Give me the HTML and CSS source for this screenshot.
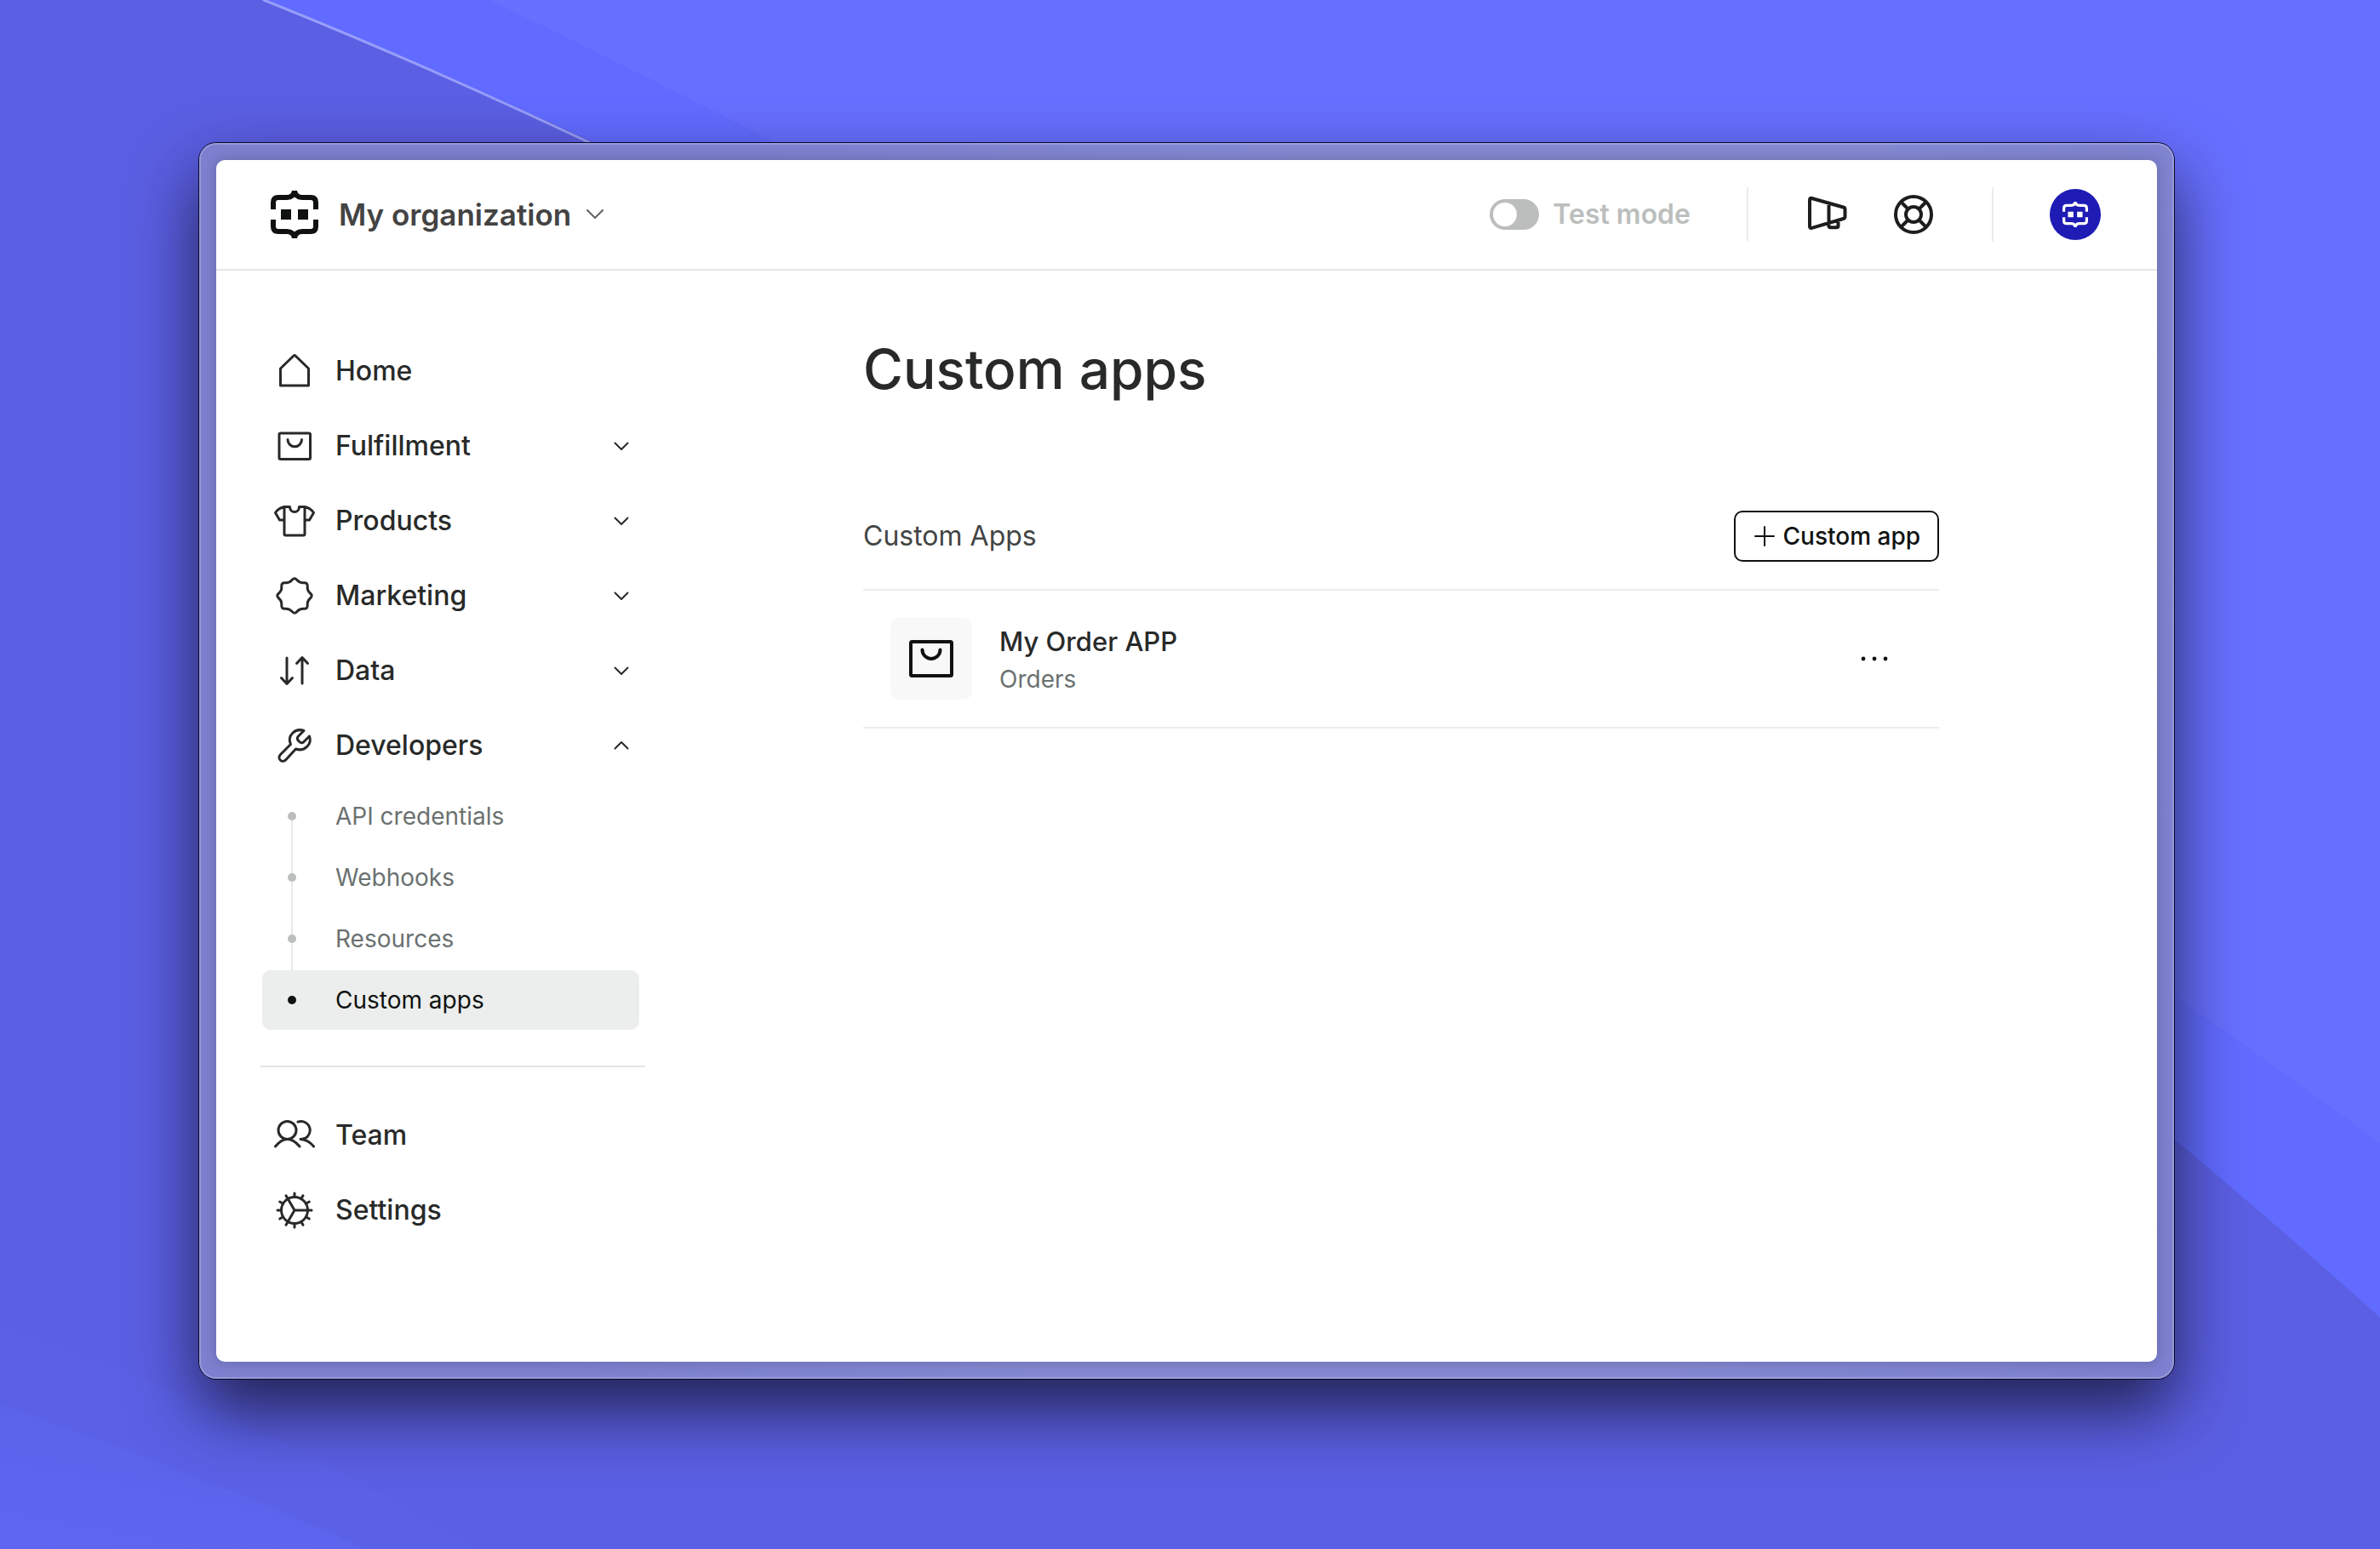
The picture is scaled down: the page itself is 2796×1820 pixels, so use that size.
FILE: index.html
```html
<!DOCTYPE html>
<html lang="en">
<head>
<meta charset="utf-8">
<title>Custom apps</title>
<link rel="stylesheet" href="styles.css">
</head>
<body>
<svg class="backdrop" viewBox="0 0 2796 1820" preserveAspectRatio="none" aria-hidden="true">
  <defs>
    <linearGradient id="corner" x1="0" y1="1" x2="0.5" y2="0">
      <stop offset="0" stop-color="#5f67f2"/>
      <stop offset="1" stop-color="#5a62e9"/>
    </linearGradient>
  </defs>
  <rect width="2796" height="1820" fill="#5b5fe3"/>
  <path d="M0 1560Q260 1640 560 1820H0Z" fill="#5a61e6"/>
  <path d="M0 1650Q230 1730 430 1820H0Z" fill="url(#corner)"/>
  <path d="M310 0Q1700 560 2796 1548V0Z" fill="#616bff"/>
  <path d="M575 0Q1700 540 2796 1343V0Z" fill="#676fff"/>
  <path d="M310 0Q510 80 740 190" fill="none" stroke="#989df8" stroke-width="3"/>
</svg>
<div class="window">
  <div class="app">
    <header class="topbar">
      <button class="org" type="button">
        <svg class="org-logo" viewBox="0 0 56 56" aria-hidden="true">
          <g id="robot">
            <path d="M3 22V14Q3 8 9 8H19Q27 8 28 0Q29 8 37 8H47Q53 8 53 14V22M3 34V42Q3 48 9 48H19Q27 48 28 56Q29 48 37 48H47Q53 48 53 42V34" fill="none" stroke="currentColor" stroke-width="6" stroke-linejoin="bevel"/>
            <path d="M12 22H24V34H12ZM32 22H44V34H32Z" fill="currentColor"/>
          </g>
        </svg>
        <span>My organization</span>
        <svg class="org-chevron" viewBox="0 0 20 12" aria-hidden="true"><path d="M1 1l9 9 9-9"/></svg>
      </button>
      <div class="tools">
        <label class="test-mode"><input type="checkbox" role="switch"><span>Test mode</span></label>
        <span class="rule"></span>
        <div class="tool-group">
          <button class="tool" type="button" aria-label="Announcements">
            <svg viewBox="0 0 48 48"><path d="M4 7Q4 4.300 6.500 5L43.500 15.500Q45.500 16 45.500 18V26.500Q45.500 28.500 43.500 29L6.500 39.800Q4 40.500 4 38ZM26.500 11V37.500Q26.500 39.300 28.500 39.300H35.500Q37.500 39.300 37.500 37.500V31"/></svg>
          </button>
          <button class="tool" type="button" aria-label="Help">
            <svg viewBox="0 0 48 48"><circle cx="24" cy="24" r="21"/><circle cx="24" cy="24" r="9"/><path d="M9.500 9.500l8 8M38.500 9.500l-8 8M9.500 38.500l8-8M38.500 38.500l-8-8"/></svg>
          </button>
        </div>
        <span class="rule"></span>
        <button class="avatar" type="button" aria-label="Account">
          <svg viewBox="0 0 56 56"><use href="#robot"/></svg>
        </button>
      </div>
    </header>
    <div class="body">
      <nav class="sidebar" aria-label="Main">
        <ul class="nav">
          <li><a class="nav-item" href="#home">
            <svg class="icon" viewBox="0 0 48 48"><path d="M7.500 41V21L23 6Q24 5 25 6L40.500 21V41Z"/></svg>
            <span>Home</span></a></li>
          <li><a class="nav-item" href="#fulfillment">
            <svg class="icon" viewBox="0 0 48 48"><rect x="6" y="9" width="36.500" height="30.500" rx="1.500"/><path d="M16 16.500a8 8 0 0 0 16.500 0"/></svg>
            <span>Fulfillment</span>
            <svg class="chevron" viewBox="0 0 24 24"><path d="M4.500 8.500l7.500 7.500 7.500-7.500"/></svg></a></li>
          <li><a class="nav-item" href="#products">
            <svg class="icon" viewBox="0 0 48 48"><path d="M12 23H6.500L1.500 14.500Q5 9 12 7.500H18.500C18.500 15.500 29.500 15.500 29.500 7.500H36Q43 9 46.500 14.500L41.500 23H36M12 8V39.500Q12 41 13.500 41H34.500Q36 41 36 39.500V8"/></svg>
            <span>Products</span>
            <svg class="chevron" viewBox="0 0 24 24"><path d="M4.500 8.500l7.500 7.500 7.500-7.500"/></svg></a></li>
          <li><a class="nav-item" href="#marketing">
            <svg class="icon" viewBox="0 0 48 48"><path d="M27 5.600Q30.100 9.200 34.900 8.800Q39.600 8.400 39.200 13.100Q38.800 17.900 42.400 21Q46 24 42.400 27Q38.800 30.100 39.200 34.900Q39.600 39.600 34.900 39.200Q30.100 38.800 27 42.400Q24 46 21 42.400Q17.900 38.800 13.100 39.200Q8.400 39.600 8.800 34.900Q9.200 30.100 5.600 27Q2 24 5.600 21Q9.200 17.900 8.800 13.100Q8.400 8.400 13.100 8.800Q17.900 9.200 21 5.600Q24 2 27 5.600Z"/></svg>
            <span>Marketing</span>
            <svg class="chevron" viewBox="0 0 24 24"><path d="M4.500 8.500l7.500 7.500 7.500-7.500"/></svg></a></li>
          <li><a class="nav-item" href="#data">
            <svg class="icon" viewBox="0 0 48 48"><path d="M15 9V39M8.500 32.500L15 39.500L21.500 32.500M33 39V9M26.500 15.500L33 8.500L39.500 15.500"/></svg>
            <span>Data</span>
            <svg class="chevron" viewBox="0 0 24 24"><path d="M4.500 8.500l7.500 7.500 7.500-7.500"/></svg></a></li>
          <li><a class="nav-item" href="#developers" aria-expanded="true">
            <svg class="icon" viewBox="0 0 48 48"><path d="M35 6.500C25 3 15 12 19.500 22.500L7.500 34.500C3 39.500 9.500 45.500 14 40.500L25.500 28C35.500 31.500 45 22.500 41.500 13L34.500 20C31.500 22.500 25.500 17 28 13.500Z"/></svg>
            <span>Developers</span>
            <svg class="chevron" viewBox="0 0 24 24"><path d="M4.500 15.500l7.500-7.500 7.500 7.500"/></svg></a>
            <ul class="subnav">
              <li><a class="sub-item" href="#api-credentials">API credentials</a></li>
              <li><a class="sub-item" href="#webhooks">Webhooks</a></li>
              <li><a class="sub-item" href="#resources">Resources</a></li>
              <li><a class="sub-item current" href="#custom-apps" aria-current="page">Custom apps</a></li>
            </ul></li>
        </ul>
        <hr class="nav-rule">
        <ul class="nav">
          <li><a class="nav-item" href="#team">
            <svg class="icon" viewBox="0 0 48 48"><circle cx="15.500" cy="18" r="10.500"/><path d="M1.500 37Q15.500 20 30 37M28 8.200A10.500 10.500 0 1 1 31 28.500Q40 29 46.500 37"/></svg>
            <span>Team</span></a></li>
          <li><a class="nav-item" href="#settings">
            <svg class="icon" viewBox="0 0 48 48"><circle cx="24" cy="24" r="15.500"/><path d="M24 24H39.500M24 24L16.200 10.600M24 24L16.200 37.400"/><path d="M24 8.500V4M24 39.500V44M8.500 24H4M39.500 24H44M31.800 10.600L34 6.700M37.400 16.200L41.300 14M37.400 31.800L41.300 34M31.800 37.400L34 41.300M16.200 37.400L14 41.300M10.600 31.800L6.700 34M10.600 16.200L6.700 14M16.200 10.600L14 6.700"/></svg>
            <span>Settings</span></a></li>
        </ul>
      </nav>
      <main class="main">
        <div class="content">
          <h1>Custom apps</h1>
          <section>
            <div class="section-head">
              <h2>Custom Apps</h2>
              <button class="add" type="button">
                <svg viewBox="0 0 24 24" aria-hidden="true"><path d="M12 1V23M1 12H23"/></svg>
                <span>Custom app</span>
              </button>
            </div>
            <ul class="apps">
              <li class="app-row">
                <span class="tile"><svg viewBox="0 0 64 64" aria-hidden="true"><rect x="8" y="12" width="48" height="40" rx="1.500"/><path d="M21.500 21.500a10.500 10.500 0 0 0 21 0"/></svg></span>
                <div class="app-text">
                  <h3>My Order APP</h3>
                  <p>Orders</p>
                </div>
                <button class="more" type="button" aria-label="More actions">
                  <svg viewBox="0 0 48 24"><circle cx="11" cy="12" r="2.400"/><circle cx="24" cy="12" r="2.400"/><circle cx="37" cy="12" r="2.400"/></svg>
                </button>
              </li>
            </ul>
          </section>
        </div>
      </main>
    </div>
  </div>
</div>
</body>
</html>
```
FILE: styles.css
```css
* {
  box-sizing: border-box;
}

body {
  display: flex;
  min-height: 100vh;
  margin: 0;
  padding: 168px 242px 200px 234px;
  background: #5b5fe3;
  color: #282a29;
  font-family: Inter, "Noto Sans", sans-serif;
  font-size: 32px;
  line-height: 40px;
}

h1, h2, h3, p, ul {
  margin: 0;
  padding: 0;
}

ul {
  list-style: none;
}

a {
  color: inherit;
  text-decoration: none;
}

button {
  padding: 0;
  border: 0;
  background: none;
  color: inherit;
  font: inherit;
}

svg {
  display: block;
  flex: none;
  fill: none;
  stroke: currentColor;
  stroke-linecap: round;
  stroke-linejoin: round;
}

.backdrop {
  position: absolute;
  inset: 0;
  z-index: -1;
  width: 100%;
  height: 100%;
  stroke: none;
}

.window {
  display: flex;
  flex: 1;
  padding: 20px;
  border-radius: 20px;
  background: linear-gradient(100deg, #7c80cf 25%, #8489d2 50%, #8489d2 75%, #7c80cf 100%);
  box-shadow: inset 0 0 0 2px rgba(255, 255, 255, 0.2), 0 0 0 1px #0a0a28, 0 36px 80px rgba(0, 0, 0, 0.65);
}

.app {
  display: flex;
  flex: 1;
  flex-direction: column;
  border-radius: 10px;
  background: #fff;
  box-shadow: 0 0 16px rgba(0, 0, 0, 0.2);
}

/* Top bar */

.topbar {
  display: flex;
  align-items: center;
  justify-content: space-between;
  padding: 32px 66px 32px 64px;
  border-bottom: 2px solid #e4e5e5;
}

.org {
  display: flex;
  align-items: center;
  color: #434343;
  font-size: 35px;
  font-weight: 600;
}

.org-logo {
  width: 56px;
  height: 56px;
  margin-right: 24px;
  color: #101211;
  stroke: none;
  stroke-linecap: butt;
}

.org-chevron {
  width: 20px;
  height: 12px;
  margin-left: 18px;
  stroke-width: 2;
  color: #5f6362;
}

.tools {
  display: flex;
  align-items: center;
}

.test-mode {
  display: flex;
  align-items: center;
  gap: 16px;
  color: #bbbebd;
  font-weight: 600;
}

.test-mode input {
  display: flex;
  width: 58px;
  height: 36px;
  margin: 0;
  padding: 4px;
  border-radius: 18px;
  background: #bbbebd;
  appearance: none;
}

.test-mode input::before {
  width: 28px;
  height: 28px;
  border-radius: 50%;
  background: #fff;
  content: "";
}

.rule {
  width: 2px;
  height: 64px;
  margin: 0 66px;
  background: #ececec;
}

.tool-group {
  display: flex;
  gap: 54px;
  padding: 0 2px;
}

.tool svg {
  width: 48px;
  height: 48px;
  stroke-width: 4;
  color: #1c1e1d;
}

.avatar {
  display: grid;
  place-items: center;
  width: 60px;
  height: 60px;
  border-radius: 50%;
  background: #1e1cb4;
  color: #fff;
}

.avatar svg {
  width: 30px;
  height: 30px;
  stroke: none;
  stroke-linecap: butt;
}

/* Sidebar */

.body {
  display: flex;
  flex: 1;
}

.sidebar {
  flex: none;
  width: 504px;
  padding: 74px 0 120px 52px;
}

.nav-item {
  display: flex;
  align-items: center;
  gap: 24px;
  height: 88px;
  padding: 0 16px;
  font-weight: 500;
}

.icon {
  width: 48px;
  height: 48px;
  stroke-width: 3;
}

.chevron {
  width: 24px;
  height: 24px;
  margin-left: auto;
  stroke-width: 2;
}

.subnav {
  display: flex;
  flex-direction: column;
  gap: 2px;
  margin: 4px 7px 0 2px;
  background: linear-gradient(#e8e9e9, #e8e9e9) 34px 36px / 2px 180px no-repeat;
}

.sub-item {
  display: flex;
  align-items: center;
  gap: 46px;
  height: 70px;
  padding-left: 30px;
  border-radius: 10px;
  color: #6b7170;
  font-size: 28px;
}

.sub-item::before {
  width: 10px;
  height: 10px;
  border-radius: 50%;
  background: #bbbebd;
  content: "";
}

.sub-item.current {
  background: #eceeed;
  color: #101211;
}

.sub-item.current::before {
  background: #101211;
}

.nav-rule {
  height: 2px;
  margin: 42px 0 36px;
  border: 0;
  background: #e4e5e5;
}

/* Main column */

.main {
  flex: 1;
  padding: 80px 64px;
}

.content {
  max-width: 1264px;
  margin: 0 auto;
}

h1 {
  margin-bottom: 130px;
  font-size: 64px;
  font-weight: 500;
  line-height: 72px;
}

.section-head {
  display: flex;
  align-items: center;
  justify-content: space-between;
  padding-bottom: 32px;
}

h2 {
  color: #434544;
  font-size: 32px;
  font-weight: 400;
}

.add {
  display: flex;
  align-items: center;
  gap: 10px;
  height: 60px;
  padding: 0 20px 0 22px;
  border: 2px solid #101211;
  border-radius: 10px;
  color: #101211;
  font-size: 28px;
  font-weight: 500;
}

.add svg {
  width: 24px;
  height: 24px;
  stroke-width: 2;
}

.apps {
  border-top: 2px solid #ededed;
}

.app-row {
  display: flex;
  align-items: center;
  gap: 32px;
  padding: 32px;
  border-bottom: 2px solid #ededed;
}

.tile {
  display: grid;
  place-items: center;
  width: 96px;
  height: 96px;
  border-radius: 10px;
  background: #f8f8f8;
  color: #101211;
}

.tile svg {
  width: 64px;
  height: 64px;
  stroke-width: 4;
}

.app-text {
  padding-top: 4px;
}

h3 {
  font-size: 31px;
  font-weight: 500;
  line-height: 44px;
}

.app-text p {
  color: #6b7170;
  font-size: 28px;
  line-height: 44px;
}

.more {
  margin: 0 20px 0 auto;
}

.more svg {
  width: 48px;
  height: 24px;
  fill: #101211;
  stroke: none;
}
```
